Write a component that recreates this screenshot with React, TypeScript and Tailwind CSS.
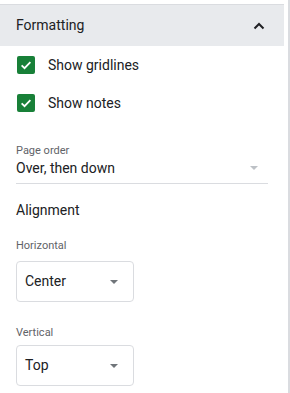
import React from 'react';

function CheckRow({ label }: { label: string }) {
  return (
    <div className="flex items-center h-[18px] pl-[17px]">
      <div className="w-[18px] h-[18px] rounded-[2px] bg-[#188038] flex items-center justify-center">
        <svg width="14" height="14" viewBox="0 0 24 24" fill="none">
          <path d="M4.5 12.5l5 5L19.5 7" stroke="#fff" strokeWidth="3" />
        </svg>
      </div>
      <span className="ml-[13px] text-[14px] text-[#202124] leading-[18px]">{label}</span>
    </div>
  );
}

function Caret() {
  return (
    <svg width="8" height="4" viewBox="0 0 8 4">
      <path d="M0 0h8L4 4z" fill="currentColor" />
    </svg>
  );
}

function SelectBox({ value }: { value: string }) {
  return (
    <div className="ml-4 w-[118px] h-[41px] border border-[#dadce0] rounded-[4px] flex items-center justify-between pl-[8px] pr-[15px]">
      <span className="text-[14px] text-[#202124]">{value}</span>
      <span className="text-[#70757a] mt-[1px]">
        <Caret />
      </span>
    </div>
  );
}

export default function App() {
  return (
    <div className="w-[290px] h-[393px] flex bg-white overflow-hidden" style={{ fontFamily: 'Roboto, "Noto Sans", sans-serif' }}>
      <div className="w-[284px] pt-[4px]">
        <div className="border-t border-[#dadce0] h-[42px] bg-[#e8eaed] flex items-center justify-between pl-4 pr-[19px]">
          <span className="text-[14px] text-[#202124]">Formatting</span>
          <svg width="12" height="8" viewBox="0 0 12 8" fill="none">
            <path d="M1.5 6.5L6 2l4.5 4.5" stroke="#202124" strokeWidth="2" />
          </svg>
        </div>

        <div className="pt-[10px] flex flex-col gap-[20px]">
          <CheckRow label="Show gridlines" />
          <CheckRow label="Show notes" />
        </div>

        <div className="mt-[32px] px-4">
          <div className="text-[11px] leading-[13px] text-[#5f6368]">Page order</div>
          <div className="mt-[1px] h-[26px] border-b border-[#dadce0] flex justify-between pt-[1px] w-[252px]">
            <span className="text-[14px] leading-[18px] text-[#202124]">Over, then down</span>
            <span className="text-[#bdc1c6] mt-[7px] mr-[10px]">
              <Caret />
            </span>
          </div>
        </div>

        <div className="mt-[17px] pl-4 text-[14px] leading-[18px] text-[#202124]">Alignment</div>

        <div className="mt-[20px] pl-4 text-[11px] leading-[13px] text-[#5f6368]">Horizontal</div>
        <div className="mt-[9px]">
          <SelectBox value="Center" />
        </div>

        <div className="mt-[24px] pl-4 text-[11px] leading-[13px] text-[#5f6368]">Vertical</div>
        <div className="mt-[6px]">
          <SelectBox value="Top" />
        </div>
      </div>
      <div className="ml-[4px] w-[2px] h-full bg-[#dadce0]" />
    </div>
  );
}
